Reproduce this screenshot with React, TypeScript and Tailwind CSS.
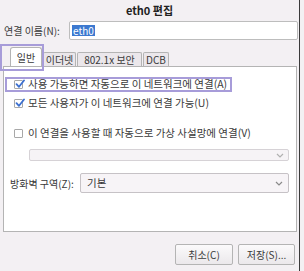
import React from 'react';

const FONT = "font-['Noto_Sans_CJK_KR','Noto_Sans',sans-serif]";

const CheckBox: React.FC<{ checked?: boolean }> = ({ checked }) => (
  <span className="relative flex h-[9px] w-[9px] shrink-0 items-center justify-center border border-[#a8a8a8] bg-white rounded-[1px]">
    {checked && (
      <svg viewBox="0 0 10 10" className="absolute left-[0px] top-[-2px] h-[10px] w-[10px]">
        <path d="M1.5 5.2 L4 7.8 L9 1.5" fill="none" stroke="#3b6fd0" strokeWidth="1.8" strokeLinecap="round" strokeLinejoin="round" />
      </svg>
    )}
  </span>
);

const Chevron: React.FC<{ color?: string }> = ({ color = '#8a8a8a' }) => (
  <svg viewBox="0 0 8 5" className="h-[5px] w-[8px]">
    <path d="M1 1 L4 4 L7 1" fill="none" stroke={color} strokeWidth="1.2" />
  </svg>
);

export default function App() {
  return (
    <div className={`relative flex h-[271px] w-[304px] overflow-hidden bg-[#f3f0f3] text-[#3a3a3a] ${FONT}`}>
      <div className="flex w-[299px] flex-col">
        {/* title */}
        <div className="flex h-[21px] items-center justify-center text-[11px] font-bold text-[#222]">eth0 편집</div>

        {/* connection name */}
        <div className="flex h-[19px] items-center">
          <span className="ml-[4px] w-[65px] text-[10px]">연결 이름(N):</span>
          <div className="flex h-[19px] w-[229px] items-center rounded-[2px] border border-[#bdbdbd] bg-white pl-[2px]">
            <span className="bg-[#3c79d0] px-[1px] text-[10px] leading-[11px] text-white">eth0</span>
          </div>
        </div>

        {/* tabs */}
        <div className="mt-[8px] flex h-[18px] items-end pl-[10px] text-[10px]">
          <div className="relative z-10 flex h-[19px] w-[32px] items-center justify-center rounded-t-[3px] border border-b-0 border-[#b4b4b4] bg-white">일반</div>
          <div className="ml-[1px] flex h-[14px] w-[33px] items-center justify-center rounded-t-[2px] border border-b-0 border-[#b4b4b4] bg-[#ebe7eb]">이더넷</div>
          <div className="ml-[1px] flex h-[14px] w-[65px] items-center justify-center rounded-t-[2px] border border-b-0 border-[#b4b4b4] bg-[#ebe7eb]">802.1x 보안</div>
          <div className="ml-[1px] flex h-[14px] w-[26px] items-center justify-center rounded-t-[2px] border border-b-0 border-[#b4b4b4] bg-[#ebe7eb]">DCB</div>
        </div>

        {/* panel */}
        <div className="ml-[3px] flex h-[166px] w-[294px] flex-col border border-[#b4b4b4] bg-white text-[10.5px]">
          <div className="mt-[10px] flex h-[14px] items-center pl-[10px]">
            <CheckBox checked />
            <span className="ml-[5px]">사용 가능하면 자동으로 이 네트워크에 연결(A)</span>
          </div>
          <div className="mt-[5px] flex h-[14px] items-center pl-[10px]">
            <CheckBox checked />
            <span className="ml-[5px]">모든 사용자가 이 네트워크에 연결 가능(U)</span>
          </div>
          <div className="mt-[16px] flex h-[14px] items-center pl-[10px]">
            <CheckBox />
            <span className="ml-[5px]">이 연결을 사용할 때 자동으로 가상 사설망에 연결(V)</span>
          </div>
          <div className="ml-[25px] mt-[9px] flex h-[12px] w-[260px] items-center justify-end rounded-[2px] border border-[#d6d2d6] bg-[#f6f3f6] pr-[4px]">
            <Chevron color="#b0b0b0" />
          </div>
          <div className="mt-[12px] flex h-[20px] items-center">
            <span className="ml-[6px] w-[70px] text-[10px]">방화벽 구역(Z):</span>
            <div className="flex h-[20px] w-[209px] items-center justify-between rounded-[2px] border border-[#c6c2c6] bg-[#f7f4f7] pl-[6px] pr-[5px]">
              <span>기본</span>
              <Chevron />
            </div>
          </div>
        </div>

        {/* buttons */}
        <div className="mt-[12px] flex h-[21px] justify-end gap-[5px] pr-[4px] text-[10px]">
          <button className="h-[21px] w-[58px] rounded-[2px] border border-[#b4b4b4] bg-gradient-to-b from-[#fbfafb] to-[#ebe8eb]">취소(C)</button>
          <button className="h-[21px] w-[57px] rounded-[2px] border border-[#b4b4b4] bg-gradient-to-b from-[#fbfafb] to-[#ebe8eb]">저장(S)...</button>
        </div>
      </div>
      <div className="h-full w-[1px] bg-[#3a3a3a]" />

      {/* annotation boxes */}
      <div className="pointer-events-none absolute left-[0px] top-[44px] h-[27px] w-[44px] border-2 border-[#a79cd9]" />
      <div className="pointer-events-none absolute left-[5px] top-[77px] h-[15px] w-[227px] border-2 border-[#a79cd9]" />
    </div>
  );
}
